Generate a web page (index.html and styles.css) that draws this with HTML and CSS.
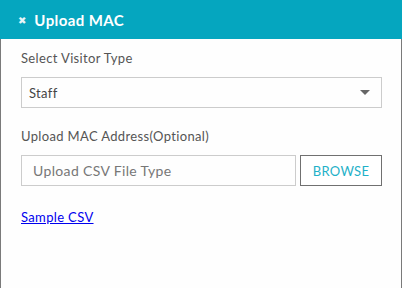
FILE: index.html
```html
<!DOCTYPE html>
<html>
<head>
    <title>Upload MAC</title>
    <link rel="stylesheet" href="styles.css">
</head>
<body>
    <div class="panel">
        <div class="panel-header">
            <span class="close">&#10006;</span>
            <span class="title">Upload MAC</span>
        </div>
        <div class="panel-body">
            <div class="field">
                <label>Select Visitor Type</label>
                <div class="select">
                    <span>Staff</span>
                    <span class="caret"></span>
                </div>
            </div>
            <div class="field">
                <label>Upload MAC Address(Optional)</label>
                <div class="file-row">
                    <div class="file-input">Upload CSV File Type</div>
                    <button class="browse-button">BROWSE</button>
                </div>
            </div>
            <a href="#" class="sample-link">Sample CSV</a>
        </div>
    </div>
</body>
</html>
```

FILE: styles.css
```css
body {
    margin: 0;
    font-family: Lato, "Open Sans", Arial, sans-serif;
    letter-spacing: 0.35px;
    background-color: #fff;
}
.panel {
    width: 402px;
    height: 288px;
    box-sizing: border-box;
    border-left: 1px solid #7a7a7a;
    border-right: 1px solid #7a7a7a;
    background-color: #fefefe;
}
.panel-header {
    height: 39px;
    margin: 0 -1px;
    background-color: #05a6bf;
    color: #fff;
    display: flex;
    align-items: center;
    padding-left: 18px;
}
.close {
    font-size: 10px;
    margin-right: 8px;
    opacity: 0.9;
}
.title {
    font-size: 15px;
    font-weight: bold;
    letter-spacing: 0.4px;
}
.panel-body {
    padding: 11px 19px 0 20px;
}
.field {
    margin-bottom: 20px;
}
.field label {
    display: block;
    font-size: 13px;
    color: #555;
    margin-bottom: 11px;
}
.select {
    height: 31px;
    box-sizing: border-box;
    border: 1px solid #ccc;
    display: flex;
    align-items: center;
    justify-content: space-between;
    padding: 0 10px 0 7px;
    font-size: 13px;
    color: #444;
}
.caret {
    width: 0;
    height: 0;
    border-left: 5px solid transparent;
    border-right: 5px solid transparent;
    border-top: 5px solid #666;
    margin-right: 1px;
}
.file-row {
    display: flex;
    gap: 4px;
}
.file-input {
    flex: 1;
    height: 31px;
    box-sizing: border-box;
    border: 1px solid #ccc;
    display: flex;
    align-items: center;
    padding-left: 11px;
    font-size: 14px;
    color: #777;
}
.browse-button {
    width: 82px;
    height: 31px;
    background-color: #fff;
    border: 1px solid #707070;
    color: #1fb1c8;
    font-family: inherit;
    font-size: 13px;
    letter-spacing: 0.3px;
    padding: 0;
}
.sample-link {
    display: inline-block;
    margin-top: 1px;
    font-size: 13px;
    color: #0000ee;
}
```
